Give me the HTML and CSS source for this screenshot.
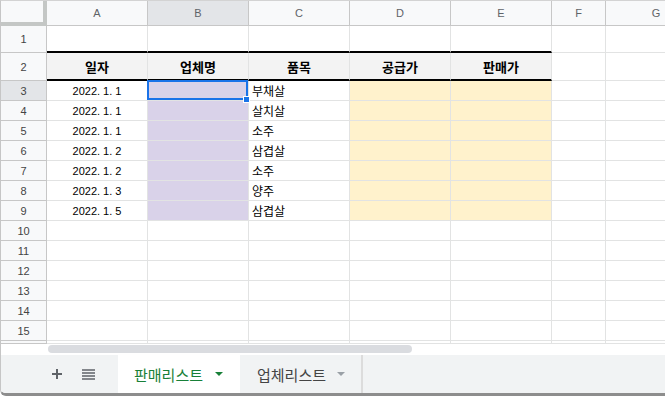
FILE: index.html
```html
<!DOCTYPE html>
<html lang="ko">
<head>
  <meta charset="UTF-8">
  <title>판매리스트</title>
  <meta name="viewport" content="width=device-width, initial-scale=1.0">
  <link rel="stylesheet" href="styles.css">
</head>
<body>
  <div class="sheet">
    <div class="grid" id="grid"></div>

    <div class="hscroll"><div class="thumb"></div></div>

    <div class="tabbar">
      <div class="tools">
        <span class="tool">
          <svg width="12" height="12" viewBox="0 0 12 12"><path d="M6 1v10M1 6h10" stroke="#5f6368" stroke-width="2" fill="none"/></svg>
        </span>
        <span class="tool">
          <svg width="13" height="11" viewBox="0 0 13 11"><path d="M0 1h13M0 4h13M0 7h13M0 10h13" stroke="#5f6368" stroke-width="1.6" fill="none"/></svg>
        </span>
      </div>
      <div class="tab active">
        <span>판매리스트</span>
        <svg width="8" height="4" viewBox="0 0 8 4"><polygon points="0,0 8,0 4,4" fill="#188038"/></svg>
      </div>
      <div class="tab">
        <span>업체리스트</span>
        <svg width="8" height="4" viewBox="0 0 8 4"><polygon points="0,0 8,0 4,4" fill="#9aa0a6"/></svg>
      </div>
    </div>
  </div>

  <script>
    const grid = document.getElementById("grid");
    const letters = ["A", "B", "C", "D", "E", "F", "G"];
    const data = {
      2: ["일자", "업체명", "품목", "공급가", "판매가"],
      3: ["2022. 1. 1", "", "부채살"],
      4: ["2022. 1. 1", "", "살치살"],
      5: ["2022. 1. 1", "", "소주"],
      6: ["2022. 1. 2", "", "삼겹살"],
      7: ["2022. 1. 2", "", "소주"],
      8: ["2022. 1. 3", "", "양주"],
      9: ["2022. 1. 5", "", "삼겹살"]
    };

    function cell(cls, text) {
      const d = document.createElement("div");
      d.className = "cell " + cls;
      d.textContent = text || "";
      grid.appendChild(d);
    }

    // column letters
    cell("corner");
    letters.forEach(l => cell("col-head" + (l === "B" ? " on" : ""), l));

    for (let r = 1; r <= 15; r++) {
      cell("row-head" + (r === 3 ? " on" : ""), r);
      letters.forEach((l, c) => {
        let cls = "";
        if (r === 1 && c < 5) cls = "edge";
        if (r === 2 && c < 5) cls = "title";
        if (r >= 3 && r <= 9) {
          if (c === 0) cls = "date";
          if (c === 1) cls = "purple";
          if (c === 2) cls = "item";
          if (c === 3 || c === 4) cls = "yellow";
        }
        if (r === 3 && c === 1) cls += " sel";
        cell(cls, (data[r] || [])[c]);
      });
    }

    // part of row 16 peeking under the grid
    cell("row-head stub");
    letters.forEach(() => cell("stub"));
  </script>
</body>
</html>
```

FILE: styles.css
```css
html, body {
  margin: 0;
  padding: 0;
  background: #fff;
  font-family: "Liberation Sans", "Noto Sans CJK KR", sans-serif;
}

.sheet {
  width: 665px;
  height: 396px;
  box-sizing: border-box;
  border-top: 1px solid #d3d3d3;
  border-left: 1px solid #c6c6c6;
  border-bottom: 3px solid #8d8d8d;
  border-bottom-left-radius: 6px;
  display: flex;
  flex-direction: column;
  overflow: hidden;
}

.grid {
  display: grid;
  grid-template-columns: 46px repeat(5, 101px) 54px 101px;
  grid-template-rows: 25px 27px 28px repeat(13, 20px) 3px;
  flex: none;
}

.cell {
  box-sizing: border-box;
  border-right: 1px solid #e2e3e3;
  border-bottom: 1px solid #e2e3e3;
  font-size: 11px;
  color: #000;
  display: flex;
  align-items: center;
  white-space: nowrap;
  overflow: hidden;
}

.corner {
  background: #f8f9fa;
  border-right: 4px solid #c4c7c5;
  border-bottom: 4px solid #c4c7c5;
}

.col-head, .row-head {
  background: #f8f9fa;
  border-color: #c7c7c7;
  justify-content: center;
  color: #5f6368;
}

.row-head {
  color: #444;
}

.on {
  background: #e3e5e8;
}

.edge {
  border-bottom: 2px solid #000;
}

.title {
  background: #f3f3f3;
  border-bottom: 2px solid #000;
  font-weight: bold;
  font-size: 13px;
  justify-content: center;
}

.date {
  justify-content: center;
}

.item {
  padding-left: 3px;
  font-size: 12px;
}

.purple {
  background: #d9d2e9;
}

.yellow {
  background: #fff2cc;
}

.sel {
  position: relative;
  overflow: visible;
}

.sel::before {
  content: "";
  position: absolute;
  top: -1px;
  left: -1px;
  right: 0;
  bottom: 0;
  border: 2px solid #1a73e8;
  z-index: 2;
}

.sel::after {
  content: "";
  position: absolute;
  right: -2px;
  bottom: -3px;
  width: 5px;
  height: 5px;
  background: #1a73e8;
  border: 1px solid #fff;
  z-index: 3;
}

.hscroll {
  height: 11px;
  padding-left: 47px;
  flex: none;
}

.thumb {
  width: 364px;
  height: 8px;
  margin-top: 1px;
  background: #dadce0;
  border-radius: 4px;
}

.tabbar {
  flex: 1;
  display: flex;
  background: #f1f3f4;
}

.tools {
  width: 117px;
  box-sizing: border-box;
  padding-left: 42px;
  display: flex;
  align-items: center;
  gap: 3px;
}

.tool {
  width: 28px;
  height: 28px;
  display: flex;
  align-items: center;
  justify-content: center;
}

.tab {
  width: 122px;
  box-sizing: border-box;
  padding-left: 17px;
  display: flex;
  align-items: center;
  gap: 11px;
  font-size: 15px;
  color: #444;
}

.tab.active {
  background: #fff;
  color: #188038;
  padding-left: 16px;
  gap: 12px;
}

.tab:last-child {
  width: 123px;
  border-right: 2px solid #dcdcdc;
}
```
